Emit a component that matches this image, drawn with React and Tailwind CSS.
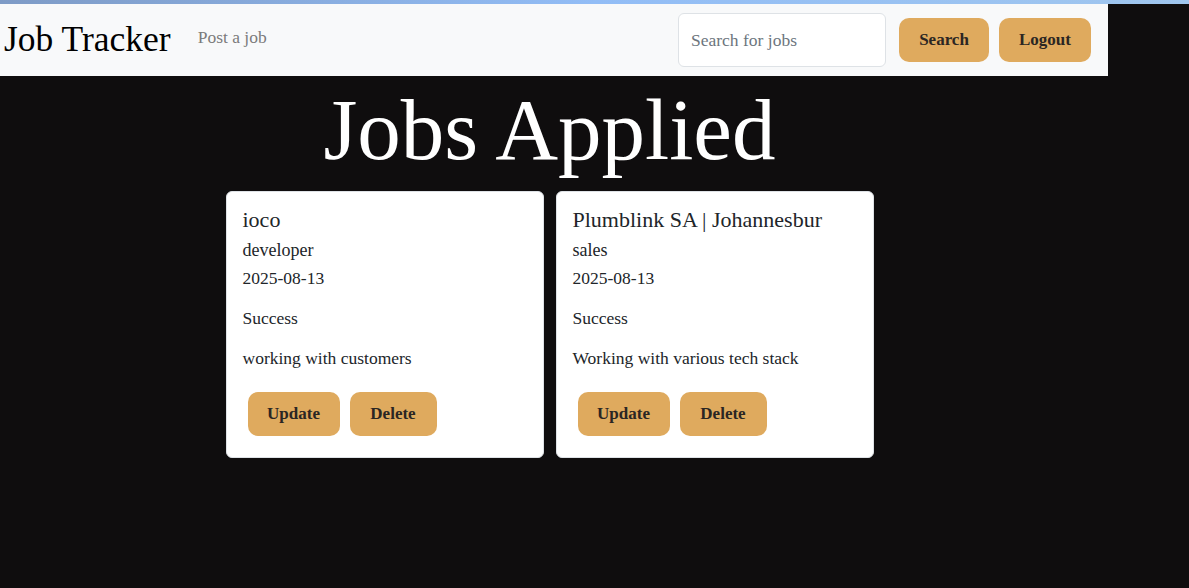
import React, { useState } from "react";

const jobs = [
  {
    id: 1,
    company: "ioco",
    role: "developer",
    date: "2025-08-13",
    status: "Success",
    notes: "working with customers",
  },
  {
    id: 2,
    company: "Plumblink SA | Johannesbur",
    role: "sales",
    date: "2025-08-13",
    status: "Success",
    notes: "Working with various tech stack",
  },
];

const serif = "font-['Liberation_Serif','Times_New_Roman',serif]";

function JobCard({ job }) {
  return (
    <div className="w-[318px] bg-white border border-[#dee2e6] rounded-[6px] px-4 pt-4 pb-4 text-[#212529]">
      <h5 className="text-[22px] leading-[24px] mb-2">{job.company}</h5>
      <h6 className="text-[18px] leading-[20px] font-medium mb-[6px]">{job.role}</h6>
      <p className="text-[17.5px] leading-[24px] mb-4 mt-[1px]">{job.date}</p>
      <p className="text-[17.5px] leading-[24px] mb-4">{job.status}</p>
      <p className="text-[17.5px] leading-[24px] mb-[2px]">{job.notes}</p>
      <div className="flex pt-[15px]">
        <button className="m-[5px] h-[44px] w-[92px] rounded-[10px] bg-[#dfaa5e] text-[17px] font-bold text-[#2b2623]">
          Update
        </button>
        <button className="m-[5px] h-[44px] w-[87px] rounded-[10px] bg-[#dfaa5e] text-[17px] font-bold text-[#2b2623]">
          Delete
        </button>
      </div>
    </div>
  );
}

export default function App() {
  const [search, setSearch] = useState("");

  return (
    <div className={`min-h-[588px] bg-[#0f0d0e] ${serif}`}>
      <div className="h-[4px] bg-gradient-to-r from-[#7e9bc6] via-[#92bdf6] to-[#a0c6ee]" />

      <nav className="w-[1108px] h-[72px] bg-[#f8f9fa] flex items-center pl-[4px] pr-[17px]">
        <a href="#" className="text-[35.5px] leading-[40px] text-black mr-[27px] -mt-[3px]">
          Job Tracker
        </a>
        <a href="#" className="text-[17.5px] text-[#7b7b7b] -mt-[5px]">
          Post a job
        </a>
        <div className="ml-auto flex items-center">
          <input
            className="w-[208px] h-[54px] rounded-[6px] border border-[#dee2e6] bg-white px-3 text-[17.5px] text-[#212529] placeholder:text-[#6c757d] outline-none"
            placeholder="Search for jobs"
            value={search}
            onChange={(e) => setSearch(e.target.value)}
          />
          <button className="ml-[13px] h-[44px] w-[90px] rounded-[10px] bg-[#dfaa5e] text-[17px] font-bold text-[#2b2623]">
            Search
          </button>
          <button className="ml-[10px] h-[44px] w-[92px] rounded-[10px] bg-[#dfaa5e] text-[17px] font-bold text-[#2b2623]">
            Logout
          </button>
        </div>
      </nav>

      <main className="w-[1099px] flex flex-col items-center">
        <h1 className="text-[87px] leading-[107px] pb-2 text-white">Jobs Applied</h1>
        <div className="flex gap-3">
          {jobs.map((job) => (
            <JobCard key={job.id} job={job} />
          ))}
        </div>
      </main>
    </div>
  );
}
